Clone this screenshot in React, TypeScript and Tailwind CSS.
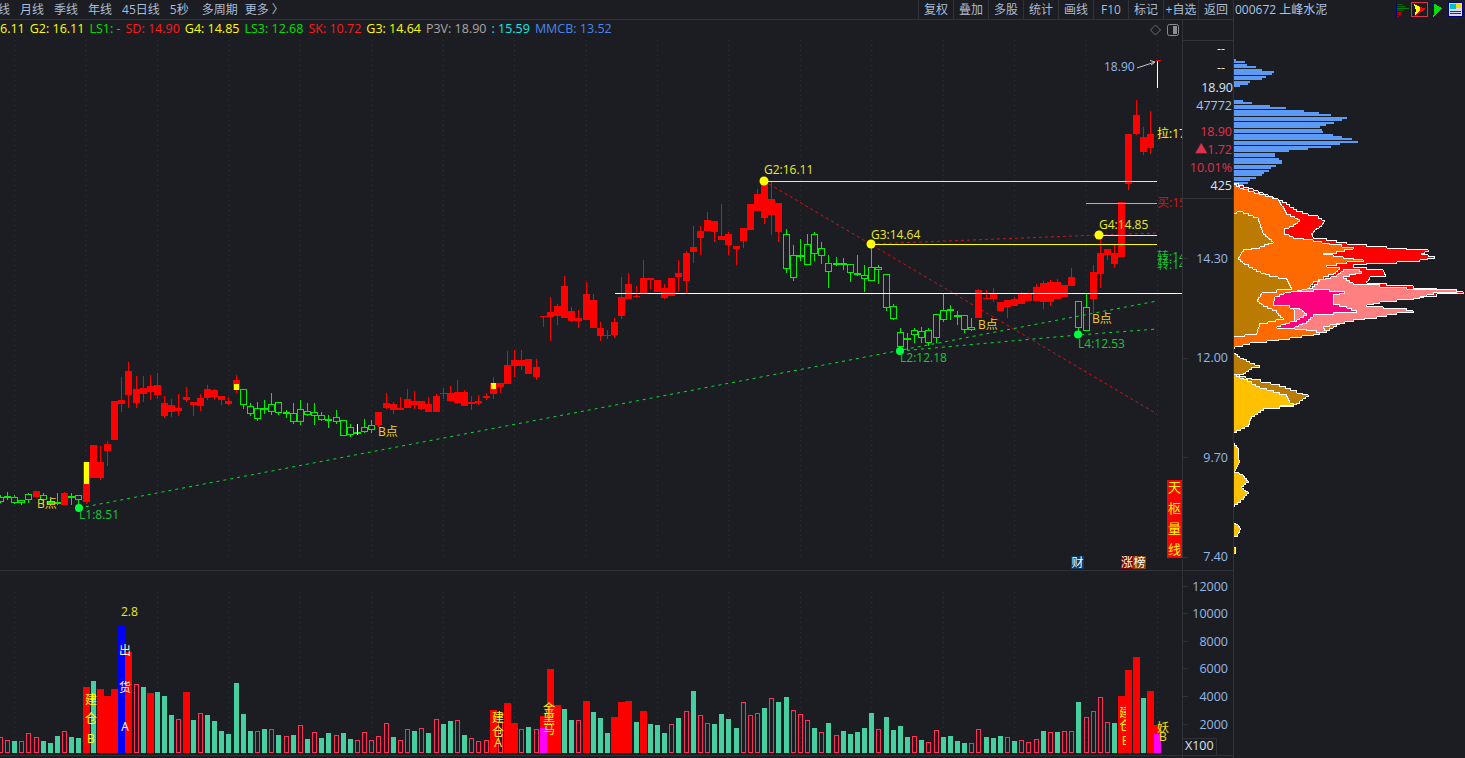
const BG = '#1c1d22';
const LINE = '#303238';
const AXIS = '#93b8e8';
const RED = '#ff0000';
const GREEN = '#00f000';
const YELLOW = '#ffff00';

// [bodyTop, bodyBottom, wickTop, wickBottom, up?]
const candles: [number, number, number, number, number][] = [
  [497, 502, 495, 503, 0], [496, 497, 492, 500, 0], [497, 503, 495, 504, 0], [500, 503, 500, 505, 0], [494, 500, 493, 503, 0],
  [491, 497, 491, 497, 1], [495, 500, 493, 505, 0], [502, 504, 499, 506, 0], [502, 504, 493, 505, 0], [493, 505, 492, 505, 1],
  [496, 498, 493, 505, 0], [495, 500, 495, 505, 0], [462, 502, 462, 504, 1], [445, 478, 445, 478, 1], [462, 478, 446, 480, 1],
  [444, 451, 441, 466, 1], [401, 440, 401, 440, 1], [400, 404, 377, 412, 1], [371, 395, 362, 408, 1], [389, 403, 376, 408, 1],
  [388, 394, 376, 402, 1], [386, 392, 375, 400, 1], [385, 395, 373, 399, 1], [403, 416, 396, 418, 1], [405, 412, 399, 417, 1],
  [408, 411, 394, 416, 1], [397, 400, 387, 402, 1], [402, 405, 402, 416, 1], [398, 406, 394, 411, 1], [389, 398, 385, 400, 1],
  [390, 397, 389, 400, 1], [396, 400, 396, 405, 1], [401, 404, 397, 405, 1], [380, 390, 375, 393, 1], [389, 405, 389, 409, 0],
  [406, 414, 403, 416, 0], [408, 419, 402, 421, 0], [408, 409, 400, 414, 0], [404, 412, 393, 415, 0], [402, 413, 402, 415, 0],
  [412, 413, 410, 418, 0], [413, 422, 403, 424, 0], [409, 422, 400, 425, 0], [411, 415, 403, 416, 0], [412, 416, 403, 425, 0],
  [415, 420, 412, 421, 0], [419, 420, 415, 428, 0], [417, 422, 410, 424, 0], [420, 436, 420, 436, 0], [427, 435, 424, 437, 0],
  [432, 433, 432, 433, 0], [427, 432, 419, 433, 0], [425, 430, 420, 433, 0], [412, 425, 412, 427, 1], [403, 408, 393, 409, 1],
  [404, 410, 402, 414, 1], [408, 410, 397, 410, 1], [399, 408, 389, 408, 1], [401, 405, 391, 409, 1], [401, 409, 401, 410, 1],
  [404, 412, 397, 412, 1], [396, 412, 394, 412, 1], [393, 394, 388, 399, 1], [393, 401, 386, 401, 1], [392, 403, 380, 404, 1],
  [392, 406, 390, 406, 1], [402, 404, 396, 410, 1], [401, 403, 395, 405, 1], [396, 398, 393, 400, 1], [383, 394, 377, 399, 1],
  [383, 387, 383, 393, 1], [365, 384, 351, 384, 1], [360, 366, 350, 377, 1], [360, 366, 350, 370, 1], [359, 374, 359, 374, 1],
  [367, 377, 359, 380, 1], [316, 317, 316, 327, 1], [312, 317, 297, 341, 1], [306, 316, 304, 325, 1], [286, 318, 276, 318, 1],
  [311, 321, 307, 322, 1], [318, 321, 310, 328, 1], [294, 320, 282, 320, 1], [300, 328, 294, 328, 1], [328, 336, 322, 341, 1],
  [335, 336, 330, 339, 1], [322, 335, 318, 338, 1], [297, 316, 277, 319, 1], [284, 299, 273, 299, 1], [296, 297, 286, 298, 1],
  [278, 293, 260, 293, 1], [278, 280, 278, 289, 1], [280, 292, 280, 292, 1], [288, 298, 284, 299, 1], [278, 296, 278, 296, 1],
  [273, 277, 260, 292, 1], [253, 281, 251, 293, 1], [247, 252, 226, 263, 1], [231, 238, 226, 255, 1], [220, 231, 212, 231, 1],
  [221, 232, 221, 242, 1], [236, 240, 204, 240, 1], [234, 245, 232, 255, 1], [246, 249, 246, 265, 1], [228, 241, 228, 248, 1],
  [204, 230, 204, 230, 1], [194, 211, 189, 211, 1], [182, 218, 182, 224, 1], [199, 215, 182, 235, 1], [203, 232, 203, 242, 1],
  [234, 269, 229, 273, 0], [255, 278, 245, 281, 0], [255, 257, 239, 261, 0], [244, 265, 234, 265, 0], [234, 254, 232, 261, 0],
  [248, 256, 242, 264, 0], [263, 272, 255, 288, 0], [263, 265, 257, 266, 0], [263, 265, 258, 270, 0], [264, 273, 264, 282, 0],
  [273, 275, 255, 276, 0], [275, 279, 265, 292, 0], [267, 281, 244, 281, 0], [267, 270, 265, 284, 0], [274, 308, 274, 311, 0],
  [306, 319, 304, 320, 0], [332, 347, 328, 350, 0], [338, 339, 333, 350, 0], [330, 335, 328, 343, 0], [331, 338, 327, 343, 0],
  [330, 343, 328, 346, 0], [314, 338, 314, 343, 0], [310, 320, 294, 322, 0], [309, 311, 305, 320, 0], [315, 317, 311, 325, 0],
  [315, 330, 315, 333, 0], [327, 330, 318, 331, 0], [290, 318, 289, 318, 1], [298, 299, 290, 299, 1], [294, 299, 288, 302, 1],
  [302, 311, 302, 311, 1], [300, 307, 300, 318, 1], [299, 306, 297, 306, 1], [294, 304, 292, 304, 1], [294, 301, 292, 301, 1],
  [287, 301, 284, 301, 1], [283, 302, 281, 309, 1], [282, 302, 280, 306, 1], [282, 299, 279, 299, 1], [285, 297, 285, 297, 1],
  [277, 286, 268, 286, 1], [301, 328, 301, 333, 0], [307, 331, 293, 331, 0], [272, 299, 265, 313, 1], [253, 274, 235, 288, 1],
  [249, 255, 249, 260, 1], [253, 264, 245, 268, 1], [202, 257, 202, 257, 1], [134, 184, 134, 190, 1], [115, 134, 100, 135, 1],
  [137, 152, 127, 155, 1], [134, 148, 111, 154, 1],
];

// volume bars: top y + kind (h hollow, r filled red, t teal)
const volume =
  '737h 740h 741t 741h 733h 737h 741t 743t 736t 731h 737t 738t 687r 681t 689r 696r 689r 625b 652r 684h 687t 693r 692t 696t 715t 719h 692r 720t 713h 715t 721t 731t 734t 683t 714t 731t 731h 729t 729h 735t 736h 735t 725h 739t 732h 738t 733t 735h 733t 739t 740h 732h 740h 736h 723h 737t ' +
  '740h 729h 731t 728h 733t 719h 724t 721t 720h 735t 738h 741h 740h 710r 721h 703r 723r 729h 727t 729h 716r 669r 705r 709t 720t 720h 701r 712t 718t 733t 717r 702r 701r 722t 711r 724t 725t 733t 724h 718t 711h 691t 715h 723h 724t 714t 719t 728t 702h 715h 713h 708t 698h 702t 697t 710h ' +
  '714h 720h 728t 732h 723t 735h 731t 734t 732t 728t 713t 729h 717t 730t 726t 737t 736h 740t 742h 730h 737t 736t 741t 743t 743h 729h 737t 738t 736t 737h 741t 740h 742h 739h 731t 732h 732t 731h 731h 702t 717h 711h 697h 722h 723t 696r 670r 657r 698t 691r 725r';

const blueTop = [2, 11, 13, 22, 28, 40, 38, 32, 28, 16, 14, 6];
const blueMid = [9, 18, 36, 52, 70, 85, 97, 113, 108, 100, 92, 86, 88, 89, 99, 108, 118, 124, 106, 97, 74, 55, 41, 41, 45, 48, 48, 42, 37, 35, 30, 28, 22, 16, 14, 9];

const colAt = (i: number) => Math.floor(0.3 + i * 7.143);
const gridXs = Array.from({ length: 17 }, (_, i) => 14.6 + i * 71.43);

// outline as 2px rows, the way the profile is painted
function stair(pts: number[][]) {
  const out: string[] = [`${pts[0][0]},${pts[0][1]}`];
  for (let i = 1; i < pts.length; i++) {
    const [ax, ay] = pts[i - 1];
    const [bx, by] = pts[i];
    const n = Math.max(1, Math.round(Math.abs(by - ay) / 6));
    let py = ay;
    for (let j = 1; j <= n; j++) {
      const x = Math.round(ax + ((bx - ax) * j) / n);
      const y = Math.round(ay + ((by - ay) * j) / n);
      out.push(`${x},${py}`, `${x},${y}`);
      py = y;
    }
  }
  return out.join(' ');
}

const profile: { fill: string; pts: number[][] }[] = [
  { fill: '#ff0000', pts: [[160, 10], [295, 62], [320, 75], [350, 95], [385, 108], [415, 116], [435, 125], [425, 140], [410, 150], [395, 165], [400, 175], [440, 182], [500, 193], [560, 200], [620, 205], [680, 210], [745, 215], [725, 225], [765, 235], [720, 245], [650, 250], [560, 255], [520, 262], [560, 270], [610, 275], [618, 290], [570, 298], [560, 310], [620, 318], [700, 325], [770, 330], [850, 342], [770, 350], [730, 354], [600, 370], [160, 380]] },
  { fill: '#ff6a00', pts: [[160, 15], [190, 30], [240, 45], [295, 62], [310, 85], [320, 105], [345, 115], [360, 125], [340, 140], [315, 150], [315, 165], [340, 175], [400, 185], [450, 195], [520, 208], [470, 220], [430, 225], [490, 235], [550, 245], [500, 250], [440, 262], [480, 270], [460, 285], [400, 310], [390, 325], [500, 340], [500, 420], [440, 458], [400, 468], [330, 478], [260, 488], [210, 495], [165, 505], [160, 505]] },
  { fill: '#ff8080', pts: [[390, 325], [420, 300], [470, 285], [490, 270], [530, 268], [545, 280], [490, 295], [520, 315], [600, 322], [680, 328], [750, 330], [830, 338], [760, 345], [700, 360], [600, 370], [560, 380], [610, 385], [680, 393], [700, 398], [650, 405], [590, 415], [520, 425], [470, 435], [430, 445], [440, 458], [380, 448], [345, 445], [340, 335]] },
  { fill: '#ff0080', pts: [[340, 335], [400, 330], [450, 335], [495, 340], [460, 350], [460, 375], [500, 385], [530, 398], [460, 405], [400, 412], [380, 430], [345, 445], [290, 440], [330, 425], [350, 420], [380, 400], [360, 385], [330, 378], [280, 370], [285, 350], [310, 340]] },
  { fill: '#bb7a00', pts: [[160, 100], [170, 95], [190, 100], [235, 120], [245, 150], [250, 165], [270, 180], [280, 190], [240, 205], [190, 215], [175, 240], [195, 255], [230, 275], [270, 290], [320, 300], [335, 330], [290, 338], [245, 345], [232, 365], [250, 380], [290, 400], [310, 420], [240, 435], [230, 465], [160, 475]] },
  { fill: '#bb7a00', pts: [[160, 520], [180, 535], [210, 550], [240, 562], [215, 570], [190, 585], [160, 585]] },
  { fill: '#bb7a00', pts: [[160, 585], [215, 600], [300, 620], [350, 640], [385, 650], [360, 670], [340, 680], [160, 690]] },
  { fill: '#ffc000', pts: [[160, 585], [190, 600], [240, 625], [320, 650], [330, 670], [340, 678], [300, 685], [250, 692], [215, 715], [205, 740], [160, 762]] },
  { fill: '#ffc000', pts: [[160, 790], [175, 810], [178, 850], [165, 878], [190, 890], [205, 908], [185, 925], [205, 942], [190, 960], [165, 980], [160, 980]] },
  { fill: '#ffc000', pts: [[160, 1030], [175, 1040], [182, 1050], [172, 1070], [160, 1072]] },
  { fill: '#ffc000', pts: [[160, 1102], [167, 1105], [167, 1120], [160, 1125]] },
];

function Candles() {
  return (
    <g shapeRendering="crispEdges">
      {candles.map(([top, bot, wt, wb, up], i) => {
        const c = colAt(i);
        if (up) {
          return (
            <g key={i} fill={RED}>
              <rect x={c} y={wt} width={1} height={wb - wt} />
              <rect x={c - 3} y={top} width={7} height={Math.max(bot - top, 1)} />
            </g>
          );
        }
        return (
          <g key={i} fill={GREEN}>
            {wt < top && <rect x={c} y={wt} width={1} height={top - wt} />}
            {wb > bot && <rect x={c} y={bot} width={1} height={wb - bot} />}
            <rect x={c - 2.5} y={top + 0.5} width={6} height={Math.max(bot - top - 1, 1)} fill="none" stroke={GREEN} />
          </g>
        );
      })}
      <rect x={84} y={462} width={5} height={22} fill={YELLOW} />
      <rect x={234} y={384} width={5} height={6} fill={YELLOW} />
      <rect x={491} y={383} width={5} height={6} fill={YELLOW} />
      <rect x={357} y={424} width={1} height={11} fill="#ffffff" />
      <rect x={1157} y={60} width={1} height={28} fill="#ffffff" />
      <rect x={1156} y={60} width={5} height={1} fill={RED} />
    </g>
  );
}

function Label({ x, y, fill, children }: { x: number; y: number; fill: string; children: string }) {
  return (
    <text x={x} y={y} fill={fill} fontSize={12}>
      {children}
    </text>
  );
}

function Tag({ x, w, fill, children }: { x: number; w: number; fill: string; children: string }) {
  return (
    <g>
      <rect x={x} y={556} width={w} height={13} fill={fill} />
      <text x={x + w / 2} y={567} fill="#ffffff" fontSize={12} textAnchor="middle">
        {children}
      </text>
    </g>
  );
}

function MainChart() {
  const axisTicks = [258, 357.5, 457, 556.5];
  return (
    <svg viewBox="0 39 1233 531" className="block w-[1233px] h-[531px]">
      <defs>
        <clipPath id="plot">
          <rect x={0} y={39} width={1182} height={531} />
        </clipPath>
      </defs>
      {gridXs.map((x) => (
        <line key={x} x1={x} x2={x} y1={40} y2={556} stroke="#34363c" strokeDasharray="1 4" />
      ))}

      {/* trend lines */}
      <g fill="none" strokeWidth={1}>
        <polyline points="79,508 1157,301" stroke="#00e030" strokeDasharray="3 4" />
        <polyline points="900,351 1078,335 1157,329" stroke="#00e030" strokeDasharray="3 4" />
        <polyline points="764,181 1157,414" stroke="#d81010" strokeDasharray="3 3" />
        <polyline points="871,244 1099,235 1157,233" stroke="#d81010" strokeDasharray="3 3" />
      </g>

      <Candles />

      <g shapeRendering="crispEdges">
        <rect x={615} y={293} width={567} height={1} fill="#ffffff" />
        <rect x={764} y={181} width={393} height={1} fill={YELLOW} />
        <rect x={871} y={244} width={286} height={1} fill={YELLOW} />
        <rect x={1099} y={235} width={58} height={1} fill={YELLOW} />
        <rect x={1086} y={203} width={71} height={1} fill="#40e0e0" />
      </g>

      <circle cx={764} cy={181} r={4.5} fill={YELLOW} />
      <circle cx={871} cy={244} r={4.5} fill={YELLOW} />
      <circle cx={1099} cy={235} r={4.5} fill={YELLOW} />
      <circle cx={79} cy={508} r={4} fill="#00ff40" />
      <circle cx={900} cy={351} r={4} fill="#00ff40" />
      <circle cx={1078} cy={334.5} r={4} fill="#00ff40" />

      <Label x={764} y={174} fill="#eaea20">G2:16.11</Label>
      <Label x={871} y={239} fill="#eaea20">G3:14.64</Label>
      <Label x={1099} y={229} fill="#eaea20">G4:14.85</Label>
      <Label x={79} y={519} fill="#14c838">L1:8.51</Label>
      <Label x={900} y={362} fill="#14c838">L2:12.18</Label>
      <Label x={1078} y={348} fill="#14c838">L4:12.53</Label>
      <Label x={37} y={508} fill="#f0d020">B点</Label>
      <Label x={378} y={436} fill="#f0d020">B点</Label>
      <Label x={978} y={329} fill="#f0d020">B点</Label>
      <Label x={1092} y={323} fill="#f0d020">B点</Label>
      <Label x={1104} y={71} fill={AXIS}>18.90</Label>
      <path d="M1137 68 L1155 62 M1150 60.5 L1155 62 L1151 65" fill="none" stroke="#c0c4cc" strokeWidth={1} />

      <g clipPath="url(#plot)">
        <Label x={1157} y={138} fill={YELLOW}>拉:17</Label>
        <Label x={1157} y={207} fill="#e01010">买:15</Label>
        <Label x={1157} y={261} fill="#10c830">转:14</Label>
        <Label x={1157} y={269} fill="#10c830">转:14</Label>
      </g>

      <rect x={1167} y={480} width={15} height={78} fill={RED} />
      {['天', '枢', '量', '线'].map((c, i) => (
        <text key={c} x={1174.5} y={492 + i * 20.5} fill={YELLOW} fontSize={13} textAnchor="middle">
          {c}
        </text>
      ))}
      <Tag x={1071} w={13} fill="#0a3a6a">财</Tag>
      <Tag x={1121} w={12} fill="#800000">涨</Tag>
      <Tag x={1133} w={13} fill="#804000">榜</Tag>

      {/* price axis */}
      <g shapeRendering="crispEdges">
        <rect x={1182} y={39} width={1} height={531} fill={LINE} />
        <rect x={1183} y={40} width={50} height={1} fill={LINE} />
        <rect x={1183} y={198} width={50} height={1} fill={LINE} />
        {axisTicks.map((y) => (
          <rect key={y} x={1183} y={y} width={5} height={1} fill={LINE} />
        ))}
      </g>
      <g fontSize={12.5} textAnchor="end">
        <text x={1225} y={53} fill="#e8e8e8">--</text>
        <text x={1225} y={72} fill="#e8e8e8">--</text>
        <text x={1233} y={92} fill="#d8e4f4">18.90</text>
        <text x={1232} y={110} fill="#a8c4e8">47772</text>
        <text x={1232} y={136} fill="#e0304a">18.90</text>
        <text x={1232} y={154} fill="#e0304a">▲1.72</text>
        <text x={1232} y={172} fill="#e0304a">10.01%</text>
        <text x={1232} y={190} fill="#d8e4f4">425</text>
        <text x={1228} y={263} fill={AXIS}>14.30</text>
        <text x={1228} y={362} fill={AXIS}>12.00</text>
        <text x={1228} y={462} fill={AXIS}>9.70</text>
        <text x={1228} y={561} fill={AXIS}>7.40</text>
      </g>
    </svg>
  );
}

function Vert({ x, ys, fill, children }: { x: number; ys: number[]; fill: string; children: string }) {
  return (
    <g fill={fill} fontSize={12} textAnchor="middle">
      {children.split('').map((c, i) => (
        <text key={i} x={x} y={ys[i]}>
          {c}
        </text>
      ))}
    </g>
  );
}

function VolumeChart() {
  const ticks = [
    [586, '12000'],
    [613, '10000'],
    [641, '8000'],
    [668, '6000'],
    [696, '4000'],
    [724, '2000'],
  ] as const;
  const bars = volume.split(' ');
  return (
    <svg viewBox="0 571 1233 187" className="block w-[1233px] h-[187px]">
      <defs>
        <clipPath id="half">
          <rect x={1120} y={690} width={6} height={60} />
        </clipPath>
      </defs>
      {gridXs.map((x) => (
        <line key={x} x1={x} x2={x} y1={592} y2={752} stroke="#34363c" strokeDasharray="1 4" />
      ))}
      <g shapeRendering="crispEdges">
        {bars.map((b, i) => {
          const top = parseInt(b);
          const kind = b[b.length - 1];
          const c = colAt(i);
          if (kind === 't') return <rect key={i} x={c - 2} y={top} width={5} height={753 - top} fill="#48cfa0" />;
          if (kind === 'h')
            return <rect key={i} x={c - 1.5} y={top + 0.5} width={4} height={752 - top} fill="none" stroke="#ff3055" />;
          if (kind === 'b') return <rect key={i} x={c - 3} y={top} width={7} height={753 - top} fill="#0000ff" />;
          return <rect key={i} x={c - 3} y={top} width={7} height={753 - top} fill={RED} />;
        })}
        <rect x={540} y={728} width={7} height={25} fill="#ff00ff" />
        <rect x={1154} y={734} width={7} height={19} fill="#ff00ff" />
        <rect x={0} y={755} width={1233} height={1} fill={LINE} />
        <rect x={1182} y={571} width={1} height={187} fill={LINE} />
        <rect x={1183} y={738} width={33} height={1} fill={LINE} />
        <rect x={1216} y={738} width={1} height={17} fill={LINE} />
        {ticks.map(([y]) => (
          <rect key={y} x={1183} y={y} width={5} height={1} fill={LINE} />
        ))}
      </g>
      <Vert x={91} ys={[704, 723, 743]} fill={YELLOW}>建仓B</Vert>
      <Vert x={125} ys={[655, 692, 731]} fill="#ffffff">出货A</Vert>
      <Vert x={498} ys={[722, 736, 747]} fill={YELLOW}>建仓A</Vert>
      <Vert x={549} ys={[713, 724, 734]} fill={YELLOW}>金黑马</Vert>
      <g clipPath="url(#half)">
        <Vert x={1125} ys={[717, 730, 745]} fill={YELLOW}>建仓E</Vert>
      </g>
      <Vert x={1163} ys={[732, 741]} fill="#e0e020">妖B</Vert>
      <text x={121} y={616} fill="#eaea20" fontSize={12}>2.8</text>
      <g fontSize={12.5} fill={AXIS} textAnchor="end">
        {ticks.map(([y, label]) => (
          <text key={y} x={1228} y={y + 4.5}>
            {label}
          </text>
        ))}
      </g>
      <text x={1185} y={750} fontSize={12.5} fill="#d8e4f4">X100</text>
    </svg>
  );
}

function VolumeProfile() {
  return (
    <svg viewBox="1234 20 231 738" className="block w-[231px] h-[738px]">
      <g shapeRendering="crispEdges" fill="#5b9bf5">
        {blueTop.map((w, i) => (
          <rect key={i} x={1234} y={59 + i * 2.4} width={w} height={2} />
        ))}
        {blueMid.map((w, i) => (
          <rect key={i} x={1234} y={100 + i * 2.4} width={w} height={2} />
        ))}
      </g>
      <g transform="translate(1180 180) scale(0.33333)" stroke="#ffffff" strokeWidth={3} shapeRendering="crispEdges">
        {profile.map((p, i) => (
          <polygon key={i} points={stair(p.pts)} fill={p.fill} />
        ))}
        <rect x={160} y={10} width={3} height={1122} fill="#ffffff" stroke="none" />
      </g>
    </svg>
  );
}

function HeaderIcons() {
  return (
    <svg viewBox="0 0 69 18" className="block w-[69px] h-[18px]" shapeRendering="crispEdges">
      {/* bars */}
      <g>
        <rect x={0} y={2} width={1} height={14} fill="#000080" />
        <rect x={1} y={3} width={6} height={1} fill="#006000" />
        <rect x={1} y={5} width={9} height={1} fill="#006000" />
        <rect x={1} y={7} width={12} height={1} fill="#008000" />
        <rect x={1} y={9} width={7} height={1} fill="#006000" />
        <rect x={1} y={11} width={5} height={1} fill="#c00000" />
        <rect x={1} y={13} width={4} height={1} fill="#c00000" />
        <rect x={1} y={15} width={2} height={1} fill="#c00000" />
      </g>
      {/* selected arrow */}
      <rect x={15.5} y={1.5} width={16} height={14} fill="none" stroke="#e03050" />
      <polygon points="18,3 30,8 19,15 20,9" fill="#ff0000" />
      <polygon points="18,3 24,6 24,10 19,14 20,9" fill="#ffff00" />
      {/* second arrow */}
      <polygon points="35,1 46,7 37,16 38,8" fill="#00e000" />
      <polygon points="35,1 38,2.5 38,13 37,16 37.5,8" fill="#0000e0" />
      {/* panel */}
      <rect x={52.5} y={1.5} width={14} height={14} fill="#d8d8e8" stroke="#000080" />
      <rect x={54} y={3} width={6} height={5} fill="#00c0d0" />
      <rect x={60} y={3} width={5} height={4} fill="#e8e000" />
      <rect x={54} y={10} width={11} height={1} fill="#303060" />
      <rect x={54} y={12} width={11} height={1} fill="#303060" />
    </svg>
  );
}

const periods = ['线', '月线', '季线', '年线', '45日线', '5秒', '多周期', '更多 〉'];
const actions = ['复权', '叠加', '多股', '统计', '画线', 'F10', '标记', '+自选', '返回'];
const legend: [string, string][] = [
  ['6.11', 'text-[#ffff00]'],
  ['G2: 16.11', 'text-[#ffff00]'],
  ['LS1: -', 'text-[#00e000]'],
  ['SD: 14.90', 'text-[#ff1a1a]'],
  ['G4: 14.85', 'text-[#ffff00]'],
  ['LS3: 12.68', 'text-[#00e000]'],
  ['SK: 10.72', 'text-[#ff1a1a]'],
  ['G3: 14.64', 'text-[#ffff00]'],
  ['P3V: 18.90', 'text-[#a8a8a8]'],
  [': 15.59', 'text-[#00f0f0]'],
  ['MMCB: 13.52', 'text-[#4a86e8]'],
];

export default function App() {
  return (
    <div className="w-[1465px] h-[758px] flex overflow-hidden text-xs font-['Open_Sans','Noto_Sans_CJK_SC',sans-serif]" style={{ background: BG }}>
      <div className="w-[1234px] shrink-0 flex flex-col border-r border-[#303238]">
        <div className="h-5 shrink-0 flex items-center justify-between border-b border-[#303238] text-[#a9bcd6]">
          <div className="flex items-center gap-[10px] -ml-0.5">
            {periods.map((p) => (
              <span key={p} className={p === '多周期' ? 'whitespace-nowrap ml-[3px] -mr-[3px]' : 'whitespace-nowrap'}>{p}</span>
            ))}
          </div>
          <div className="flex h-full">
            {actions.map((a) => (
              <div key={a} className="w-[35px] flex items-center justify-center border-l border-[#303238] whitespace-nowrap">
                {a}
              </div>
            ))}
          </div>
        </div>
        <div className="h-[19px] shrink-0 w-[1183px] flex items-center border-r border-[#303238]">
          <div className="flex items-center gap-[5px] flex-1 text-[12.5px]">
            {legend.map(([text, color]) => (
              <span key={text} className={`whitespace-nowrap ${color}`}>{text}</span>
            ))}
          </div>
          <svg viewBox="0 0 30 14" className="w-[30px] h-[14px] mr-[2px]">
            <polygon points="5,2 10,7 5,12 0,7" fill="none" stroke="#6a6c72" transform="translate(0.5 0)" />
            <rect x={17.5} y={1.5} width={11} height={11} rx={2} fill="none" stroke="#8a8c92" />
            <rect x={23} y={3} width={4} height={8} fill="#8a8c92" />
          </svg>
        </div>
        <MainChart />
        <div className="h-px shrink-0 bg-[#303238]" />
        <VolumeChart />
      </div>
      <div className="flex-1 flex flex-col">
        <div className="h-5 shrink-0 flex items-center justify-between pl-px text-[#a8c4e8]">
          <span className="whitespace-nowrap text-xs">000672 上峰水泥</span>
          <HeaderIcons />
        </div>
        <VolumeProfile />
      </div>
    </div>
  );
}
